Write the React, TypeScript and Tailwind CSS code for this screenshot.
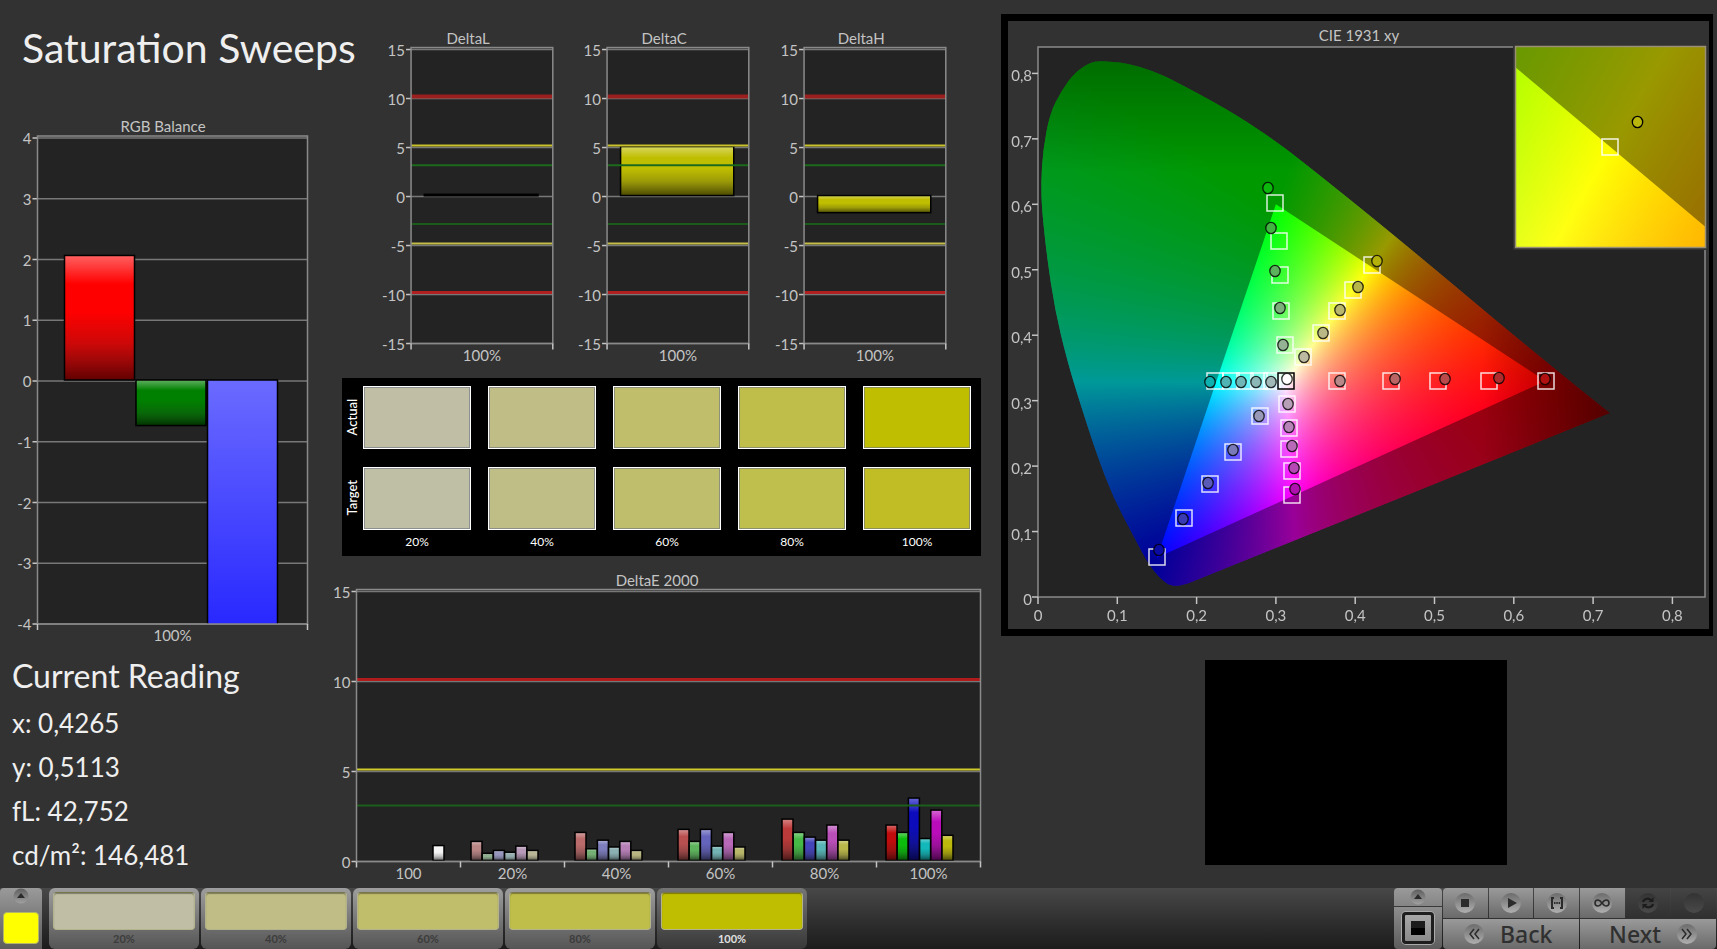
import { useEffect, useRef, type ReactNode } from "react";

type Bar = { x: number; width: number; value: number; color: string };

type Plot = { left: number; right: number; top: number; bottom: number };

type ChartProps = {
  id: string;
  title: string;
  titleX: number;
  width: number;
  height: number;
  plot: Plot;
  min: number;
  max: number;
  step: number;
  categories: string[];
  bars: Bar[];
  limits?: { value: number; color: string; thickness: number }[];
};

const yellows = ["#c0bfa5", "#c0be86", "#c0be6b", "#c0be4a", "#c0be00"];
const targetYellows = ["#bfbfa5", "#c0be87", "#bfbe6c", "#bfbf4e", "#c0be24"];
const levels = ["20%", "40%", "60%", "80%", "100%"];

const deltaLimits = [
  { value: 10, color: "#9b1f1f", thickness: 4 },
  { value: 5, color: "#c9c22a", thickness: 2 },
  { value: 3, color: "#1c6a1c", thickness: 2 },
  { value: -3, color: "#1c5a1c", thickness: 2 },
  { value: -5, color: "#c4be48", thickness: 2 },
  { value: -10, color: "#b02020", thickness: 3 },
];

const deltaELimits = [
  { value: 10, color: "#b01c1c", thickness: 3 },
  { value: 5, color: "#d2cc2a", thickness: 2 },
  { value: 3, color: "#1c5f1c", thickness: 2 },
];

const deltaE = [
  { x: 129, values: [1.06, 0.4, 0.56, 0.46, 0.8, 0.56], colors: ["#b98585", "#8fae8f", "#9595bd", "#97aeb0", "#b79ab8", "#b7b595"] },
  { x: 233, values: [1.56, 0.65, 1.13, 0.75, 1.06, 0.56], colors: ["#b96a6a", "#74b074", "#7d7dbd", "#8bb0b2", "#b67fb6", "#b8b680"] },
  { x: 336, values: [1.73, 1.06, 1.73, 0.8, 1.56, 0.75], colors: ["#b95050", "#5db45d", "#6464bd", "#74b3b5", "#b768b7", "#b8b668"] },
  { x: 440, values: [2.3, 1.56, 1.3, 1.13, 1.97, 1.13], colors: ["#bd3a3a", "#46b846", "#4545bb", "#58b4b6", "#b94fb9", "#b9b64a"] },
  { x: 544, values: [1.97, 1.56, 3.47, 1.22, 2.8, 1.4], colors: ["#c00c0c", "#0cbc0c", "#0c0cbd", "#12b8ba", "#bb0cbb", "#bcb80c"] },
];

const deltaEBars: Bar[] = [
  { x: 91, width: 11, value: 0.83, color: "#f4f4f4" },
  ...deltaE.flatMap((group) =>
    group.values.map((value, i) => ({ x: group.x + i * 11.2, width: 11, value, color: group.colors[i] }))
  ),
];

function Chart({ id, title, titleX, width, height, plot, min, max, step, categories, bars, limits = [] }: ChartProps) {
  const y = (v: number) => plot.bottom - ((v - min) / (max - min)) * (plot.bottom - plot.top);
  const ticks: number[] = [];
  for (let v = max; v >= min; v -= step) ticks.push(v);
  const plotWidth = plot.right - plot.left;
  const slot = plotWidth / categories.length;

  return (
    <svg viewBox={`0 0 ${width} ${height}`} className="block w-full overflow-visible font-['Lato',sans-serif] text-[15px]">
      <defs>
        <linearGradient id={`${id}-gloss`} x1="0" y1="0" x2="0" y2="1">
          <stop offset="0" stopColor="#fff" stopOpacity="0.38" />
          <stop offset="0.23" stopColor="#fff" stopOpacity="0" />
          <stop offset="0.45" stopColor="#222" stopOpacity="0" />
          <stop offset="0.7" stopColor="#222" stopOpacity="0.22" />
          <stop offset="1" stopColor="#000" stopOpacity="0.62" />
        </linearGradient>
        <clipPath id={`${id}-clip`}>
          <rect x={plot.left} y={plot.top - 2} width={plotWidth} height={plot.bottom - plot.top + 2} />
        </clipPath>
      </defs>
      <text x={titleX} y={plot.top - 6} textAnchor="middle" fill="#c4c4c4">{title}</text>
      <rect x={plot.left} y={plot.top - 1} width={plotWidth} height={plot.bottom - plot.top + 1} fill="#232323" />
      {ticks.map((v) => (
        <g key={v}>
          <line x1={plot.left - 5} x2={plot.left} y1={y(v)} y2={y(v)} stroke="#c4c4c4" strokeWidth="1.5" />
          <line x1={plot.left} x2={plot.right} y1={y(v)} y2={y(v)} stroke="#777" strokeWidth="1.5" />
          <text x={plot.left - 6} y={y(v) + 6} textAnchor="end" fill="#c4c4c4">{v}</text>
        </g>
      ))}
      <g clipPath={`url(#${id}-clip)`}>
        {bars.map((bar) => {
          const top = Math.min(y(bar.value), y(0)) - 1;
          const size = Math.max(Math.abs(y(bar.value) - y(0)), 1);
          return (
            <g key={bar.x}>
              <rect x={bar.x} y={top} width={bar.width} height={size} fill={bar.color} />
              <rect x={bar.x} y={top} width={bar.width} height={size} fill={`url(#${id}-gloss)`} stroke="#000" strokeWidth={size < 2 ? 2 : 1.5} />
            </g>
          );
        })}
      </g>
      {limits.map((l) => (
        <line key={l.value} x1={plot.left} x2={plot.right} y1={y(l.value) - 2} y2={y(l.value) - 2} stroke={l.color} strokeWidth={l.thickness} />
      ))}
      <rect x={plot.left} y={plot.top - 2} width={plotWidth} height={plot.bottom - plot.top + 2} fill="none" stroke="#8a8a8a" strokeWidth="1.5" />
      {[...categories, ""].map((_, i) => (
        <line key={i} x1={plot.left + i * slot} x2={plot.left + i * slot} y1={plot.bottom} y2={plot.bottom + 6} stroke="#c4c4c4" strokeWidth="1.5" />
      ))}
      {categories.map((c, i) => (
        <text key={c} x={plot.left + (i + 0.5) * slot} y={plot.bottom + 17} textAnchor="middle" fill="#c4c4c4">{c}</text>
      ))}
    </svg>
  );
}

/* Chromaticity diagram */

type Point = [number, number];

const locus: Point[] = [
  [0.721, 0.281], [0.637, 0.362], [0.4565, 0.5455], [0.333, 0.666], [0.289, 0.706], [0.238, 0.7456],
  [0.17, 0.79], [0.145, 0.8037], [0.12, 0.813], [0.1034, 0.8167], [0.078, 0.819], [0.0656, 0.8164],
  [0.0467, 0.802], [0.0303, 0.7746], [0.0151, 0.7395], [0.0063, 0.683], [0.0038, 0.6325], [0.005, 0.591],
  [0.0113, 0.5195], [0.0214, 0.4385], [0.0366, 0.362], [0.053, 0.2964], [0.0744, 0.217], [0.0946, 0.1528],
  [0.1198, 0.0947], [0.1412, 0.0458], [0.1602, 0.0214], [0.17, 0.0168], [0.183, 0.0176], [0.204, 0.028],
  [0.4565, 0.1513],
];

const gamut: Point[] = [[0.64, 0.33], [0.3, 0.6], [0.15, 0.06]];

function xyToRgb(x: number, y: number) {
  const z = 1 - x - y;
  const rgb = [
    3.2406 * x - 1.5372 * y - 0.4986 * z,
    -0.9689 * x + 1.8758 * y + 0.0415 * z,
    0.0557 * x - 0.204 * y + 1.057 * z,
  ].map((c) => Math.max(c, 0));
  const peak = Math.max(...rgb);
  const fade = 1 - Math.max(0, x - 0.56) * 2.8 - Math.max(0, y - 0.65) * 1.7;
  return rgb.map((c) => (c / peak) * 255 * fade);
}

// Paints the spectral area, dimmed outside the gamut triangle
function Chromaticity({ x0, y0, spanX, spanY, width, height }: { x0: number; y0: number; spanX: number; spanY: number; width: number; height: number }) {
  const ref = useRef<HTMLCanvasElement>(null);

  useEffect(() => {
    const canvas = ref.current!;
    const ctx = canvas.getContext("2d")!;
    const colors = document.createElement("canvas");
    colors.width = width;
    colors.height = height;
    const cctx = colors.getContext("2d")!;
    const img = cctx.createImageData(width, height);
    for (let j = 0; j < height; j++) {
      for (let i = 0; i < width; i++) {
        const [r, g, b] = xyToRgb(x0 + ((i + 0.5) / width) * spanX, y0 + (1 - (j + 0.5) / height) * spanY);
        img.data.set([r, g, b, 255], (j * width + i) * 4);
      }
    }
    cctx.putImageData(img, 0, 0);

    const px = ([x, y]: Point): Point => [((x - x0) / spanX) * width, (1 - (y - y0) / spanY) * height];
    ctx.clearRect(0, 0, width, height);
    ctx.save();
    ctx.beginPath();
    ctx.moveTo(...px(locus[0]));
    for (let i = 1; i < locus.length; i++) {
      const [cx, cy] = px(locus[i]);
      const [nx, ny] = px(locus[i + 1] ?? locus[0]);
      ctx.quadraticCurveTo(cx, cy, (cx + nx) / 2, (cy + ny) / 2);
    }
    ctx.closePath();
    ctx.clip();
    ctx.drawImage(colors, 0, 0);
    ctx.fillStyle = "rgba(0,0,0,0.4)";
    ctx.fillRect(0, 0, width, height);
    ctx.beginPath();
    gamut.forEach((p) => ctx.lineTo(...px(p)));
    ctx.closePath();
    ctx.clip();
    ctx.drawImage(colors, 0, 0);
    ctx.restore();
  }, [x0, y0, spanX, spanY, width, height]);

  return <canvas ref={ref} width={width} height={height} className="block h-full w-full" />;
}

// Target squares and measured circles, in chart units
const targets: Point[] = [
  [275, 203], [279, 241], [280, 275], [281, 311], [285, 345],
  [372, 265], [353, 290], [337, 311], [321, 333], [303, 357],
  [215, 381], [231, 381], [245, 381], [259, 381], [272, 381],
  [337, 381], [391, 381], [438, 381], [489, 381], [546, 381],
  [260, 416], [233, 452], [210, 484], [184, 518], [157, 557],
  [287, 404], [289, 428], [289, 449], [292, 471], [292, 495],
];

const readings: [number, number, string][] = [
  [268, 188, "#0bb80b"], [271, 228, "#41b441"], [275, 271, "#5cb15c"], [280, 308, "#7cb17c"], [283, 345, "#94b394"],
  [377, 261, "#b4b20a"], [358, 287, "#b8b648"], [340, 310, "#b9b76c"], [323, 333, "#bab884"], [304, 357, "#bcbaa0"],
  [210, 382, "#0fb0b0"], [226, 382, "#50b4b4"], [241, 382, "#70b6b6"], [256, 382, "#8cb7b7"], [271, 382, "#a2b9b9"],
  [340, 381, "#b98888"], [395, 379, "#ba6464"], [445, 379, "#ba4a4a"], [499, 378, "#b02c2c"], [545, 379, "#b01010"],
  [259, 416, "#9898b9"], [233, 450, "#7a7ab9"], [208, 483, "#5a5ab8"], [183, 519, "#3a3ab4"], [159, 550, "#0a0aa4"],
  [288, 404, "#b79fb7"], [289, 427, "#b884b8"], [292, 446, "#b86ab8"], [294, 468, "#b648b6"], [295, 489, "#b010b0"],
  [287, 379, "#ffffff"],
];

function CieChart() {
  const tx = (v: number) => 38 + v * 793;
  const ty = (v: number) => 597 - v * 654.5;
  const label = (i: number) => (i === 0 ? "0" : `0,${i}`);
  return (
    <svg viewBox="8 21 701 608" className="block w-full font-['Lato',sans-serif] text-[15px]">
      <text x="359" y="41" textAnchor="middle" fill="#c4c4c4">CIE 1931 xy</text>
      <rect x="38" y="47" width="667" height="550" fill="#232323" />
      <foreignObject x="38" y="47" width="667" height="550">
        <Chromaticity x0={0} y0={0} spanX={667 / 793} spanY={550 / 654.5} width={667} height={550} />
      </foreignObject>
      <rect x="38" y="47" width="667" height="550" fill="none" stroke="#8a8a8a" strokeWidth="1.5" />
      {[0, 1, 2, 3, 4, 5, 6, 7, 8].map((i) => (
        <g key={i} fill="#c4c4c4">
          <line x1={tx(i / 10)} x2={tx(i / 10)} y1="597" y2="604" stroke="#c4c4c4" strokeWidth="1.5" />
          <text x={tx(i / 10)} y="621" textAnchor="middle">{label(i)}</text>
          <line x1="32" x2="38" y1={ty(i / 10)} y2={ty(i / 10)} stroke="#c4c4c4" strokeWidth="1.5" />
          <text x="32" y={ty(i / 10) + 8} textAnchor="end">{label(i)}</text>
        </g>
      ))}
      {targets.map(([x, y]) => (
        <rect key={`${x}-${y}`} x={x - 8} y={y - 8} width="16" height="16" fill="none" stroke="#fff" strokeOpacity="0.85" strokeWidth="1.5" />
      ))}
      <rect x="278" y="373" width="16" height="16" fill="none" stroke="#000" strokeWidth="1.5" />
      {readings.map(([x, y, color]) => (
        <ellipse key={`${x}-${y}`} cx={x} cy={y} rx="5.2" ry="5.7" fill={color} stroke="#000" strokeOpacity="0.8" strokeWidth="1.3" />
      ))}
      {/* Magnified view around the current target */}
      <rect x="513" y="44" width="196" height="206" fill="#323232" />
      <foreignObject x="516" y="47" width="189" height="200">
        <Chromaticity x0={0.3943} y0={0.4803} spanX={0.05} spanY={0.05} width={189} height={200} />
      </foreignObject>
      <rect x="515.5" y="46.5" width="190" height="201" fill="none" stroke="#999075" strokeWidth="1.5" />
      <rect x="602" y="139" width="16" height="16" fill="none" stroke="#fff" strokeOpacity="0.9" strokeWidth="1.5" />
      <ellipse cx="637.5" cy="122" rx="5.2" ry="5.7" fill="#b9b60c" stroke="#000" strokeWidth="1.3" />
    </svg>
  );
}

function Swatches() {
  return (
    <div className="mt-2 bg-black pt-2 pr-[10px] font-['Lato',sans-serif] text-[12px] text-white">
      {[
        { name: "Actual", colors: yellows },
        { name: "Target", colors: targetYellows },
      ].map((row) => (
        <div key={row.name} className="mb-[18px] flex h-[63px]">
          <div className="flex w-[21px] items-center justify-center">
            <span className="rotate-180 text-[13px] font-medium leading-none [writing-mode:vertical-rl]">{row.name}</span>
          </div>
          <div className="grid flex-1 grid-cols-5 gap-[17px]">
            {row.colors.map((color) => (
              <div key={color} className="border border-white ring-1 ring-inset ring-gray-500/60" style={{ backgroundColor: color }} />
            ))}
          </div>
        </div>
      ))}
      <div className="-mt-[18px] grid h-[26px] grid-cols-5 gap-[17px] pl-[21px] text-center leading-[24px]">
        {levels.map((l) => (
          <span key={l}>{l}</span>
        ))}
      </div>
    </div>
  );
}

/* Bottom toolbar */

function Knob({ children, dim = false }: { children?: ReactNode; dim?: boolean }) {
  return (
    <span
      className={
        "flex size-5 shrink-0 items-center justify-center rounded-full bg-gradient-to-b " +
        (dim ? "from-[#333] to-[#4a4a4a] text-[#1c1c1c]" : "from-[#6c6c6c] to-[#b0b0b0] text-[#2b2b2b]")
      }
    >
      {children}
    </span>
  );
}

function UpArrow() {
  return (
    <svg viewBox="0 0 16 16" className="size-4">
      <defs>
        <linearGradient id="knob" x1="0" y1="0" x2="0" y2="1">
          <stop offset="0" stopColor="#5f5f5f" />
          <stop offset="1" stopColor="#a0a0a0" />
        </linearGradient>
      </defs>
      <circle cx="8" cy="8" r="7.5" fill="url(#knob)" />
      <path d="M8 5l4 5H4z" fill="#2b2b2b" />
    </svg>
  );
}

const transport = [
  { name: "Stop", icon: <path d="M6 6h8v8H6z" fill="currentColor" /> },
  { name: "Play", icon: <path d="M7 5l9 5-9 5z" fill="currentColor" /> },
  {
    name: "Range",
    icon: (
      <g fill="none" stroke="currentColor" strokeWidth="2">
        <path d="M7 5H5v10h2M13 5h2v10h-2" />
        <path d="M7 10h1.5M9.3 10h1.5M11.6 10h1.5" />
      </g>
    ),
  },
  {
    name: "Loop",
    icon: (
      <path
        d="M10 10c-1.5-2-2.5-3-4-3a3 3 0 0 0 0 6c1.5 0 2.5-1 4-3s2.5-3 4-3a3 3 0 0 1 0 6c-1.5 0-2.5-1-4-3z"
        fill="none"
        stroke="currentColor"
        strokeWidth="1.6"
      />
    ),
  },
  {
    name: "Refresh",
    icon: (
      <g fill="none" stroke="currentColor" strokeWidth="2.2">
        <path d="M5 9c.5-3 5-4.5 8-2M15 11c-.5 3-5 4.5-8 2" />
        <path d="M15.5 4v5h-5zM4.5 16v-5h5z" fill="currentColor" stroke="none" />
      </g>
    ),
    dim: true,
  },
  { name: "Record", icon: null, dim: true },
];

function Toolbar() {
  return (
    <footer className="flex h-[61px] justify-between bg-gradient-to-b from-[#484848] to-[#1c1c1c]">
      <div className="flex font-['Lato',sans-serif] text-[11px]">
        <button aria-label="Colors" className="mr-[7px] flex w-[42px] flex-col items-center rounded-t bg-gradient-to-b from-[#9a9a9a] to-[#5c5c5c]">
          <UpArrow />
          <span className="mt-2 h-8 w-9 rounded border border-[#b5b56a] bg-[#ffff00]" />
        </button>
        {levels.map((l, i) => (
          <button
            key={l}
            className={
              "mr-[2px] flex w-[150px] flex-col items-center rounded-md bg-gradient-to-b pt-1 font-bold " +
              (i === 4 ? "from-[#757575] to-[#383838] text-[#e0e0e0]" : "from-[#9e9e9e] to-[#555] text-[#3c3c3c]")
            }
          >
            <span
              className="h-[38px] w-[142px] rounded border border-[#b4b48c] border-t-[#77774a] shadow-[inset_0_1px_1px_rgba(0,0,0,0.35)]"
              style={{ backgroundColor: yellows[i] }}
            />
            <span className="leading-[18px]">{l}</span>
          </button>
        ))}
      </div>
      <div className="flex">
        <div className="mr-px flex w-12 flex-col">
          <button aria-label="Expand" className="flex h-[18px] items-center justify-center rounded-t bg-gradient-to-b from-[#9a9a9a] to-[#858585]">
            <UpArrow />
          </button>
          <button aria-label="Pattern window" className="mt-px flex h-[42px] items-center justify-center rounded-b bg-gradient-to-b from-[#8e8e8e] to-[#5c5c5c]">
            <span className="flex size-8 items-center justify-center rounded border-3 border-[#1e1e1e] bg-gradient-to-b from-[#a8a8a8] to-[#8a8a8a] ring-1 ring-[#aaa]">
              <span className="size-[14px] bg-gradient-to-b from-[#1c1c1c] from-50% to-black to-50%" />
            </span>
          </button>
        </div>
        <div className="mr-px flex w-[273px] flex-col gap-px">
          <div className="grid h-[30px] grid-cols-6 gap-px">
            {transport.map((t) => (
              <button
                key={t.name}
                aria-label={t.name}
                disabled={t.dim}
                className={
                  "flex items-center justify-center bg-gradient-to-b first:rounded-tl last:rounded-tr " +
                  (t.dim ? "from-[#444] to-[#303030]" : "from-[#9a9a9a] to-[#6a6a6a]")
                }
              >
                <Knob dim={t.dim}>
                  <svg viewBox="0 0 20 20" className="size-5">{t.icon}</svg>
                </Knob>
              </button>
            ))}
          </div>
          <div className="grid h-[30px] grid-cols-2 gap-px font-['Noto_Sans',sans-serif] text-[23px] font-medium leading-none text-[#303030]">
            <button className="flex items-center gap-4 rounded-bl bg-gradient-to-b from-[#9a9a9a] to-[#6a6a6a] pl-[21px]">
              <Knob>
                <svg viewBox="0 0 20 20" className="size-5" fill="none" stroke="currentColor" strokeWidth="1.5">
                  <path d="M10 5l-4 5 4 5M15 5l-4 5 4 5" />
                </svg>
              </Knob>
              Back
            </button>
            <button className="flex items-center justify-end gap-4 rounded-br bg-gradient-to-b from-[#9a9a9a] to-[#6a6a6a] pr-[19px]">
              Next
              <Knob>
                <svg viewBox="0 0 20 20" className="size-5" fill="none" stroke="currentColor" strokeWidth="1.5">
                  <path d="M5 5l4 5-4 5M10 5l4 5-4 5" />
                </svg>
              </Knob>
            </button>
          </div>
        </div>
      </div>
    </footer>
  );
}

const deltas = [
  { title: "DeltaL", value: 0.1 },
  { title: "DeltaC", value: 5 },
  { title: "DeltaH", value: -1.75 },
];

export default function App() {
  return (
    <div className="flex min-h-screen flex-col bg-[#323232] font-['Lato',sans-serif] text-[#efefef]">
      <main className="grid flex-1 grid-cols-[minmax(0,342fr)_minmax(0,659fr)_minmax(0,716fr)] items-start">
        {/* RGB balance and reading */}
        <section>
          <h1 className="mt-6 mb-10 pl-[22px] text-[41px] leading-[48px] whitespace-nowrap">Saturation Sweeps</h1>
          <Chart
            id="rgb"
            title="RGB Balance"
            titleX={163}
            width={342}
            height={539}
            plot={{ left: 37.5, right: 307.5, top: 26, bottom: 512 }}
            min={-4}
            max={4}
            step={1}
            categories={["100%"]}
            bars={[
              { x: 64.5, width: 70, value: 2.05, color: "#ff0000" },
              { x: 136, width: 70, value: -0.75, color: "#008000" },
              { x: 207.5, width: 70, value: -24, color: "#1010ff" },
            ]}
          />
          <div className="pl-3 text-[26px] leading-[44px]">
            <h2 className="text-[32px] leading-[50px]">Current Reading</h2>
            <p>x: 0,4265</p>
            <p>y: 0,5113</p>
            <p>fL: 42,752</p>
            <p>cd/m²: 146,481</p>
          </div>
        </section>

        {/* Delta charts and swatches */}
        <section className="pt-6 pr-5">
          <div className="flex pr-[14px] pl-9">
            {deltas.map((d) => (
              <div key={d.title} className="flex-1">
                <Chart
                  id={d.title}
                  title={d.title}
                  titleX={90}
                  width={196}
                  height={345}
                  plot={{ left: 33, right: 174.5, top: 25.5, bottom: 319 }}
                  min={-15}
                  max={15}
                  step={5}
                  categories={["100%"]}
                  bars={[{ x: 46.5, width: 113, value: d.value, color: "#c0be00" }]}
                  limits={deltaLimits}
                />
              </div>
            ))}
          </div>
          <Swatches />
          <div className="mt-2">
            <Chart
              id="deltaE"
              title="DeltaE 2000"
              titleX={315}
              width={639}
              height={320}
              plot={{ left: 14.5, right: 638.5, top: 27.5, bottom: 297.5 }}
              min={0}
              max={15}
              step={5}
              categories={["100", ...levels]}
              bars={deltaEBars}
              limits={deltaELimits}
            />
          </div>
        </section>

        {/* Chromaticity */}
        <section className="pt-[14px] pr-1">
          <div className="border-7 border-r-4 border-black">
            <CieChart />
          </div>
          <div className="mr-[29%] ml-auto mt-6 aspect-[301/204] w-[42.4%] bg-black" />
        </section>
      </main>
      <Toolbar />
    </div>
  );
}
